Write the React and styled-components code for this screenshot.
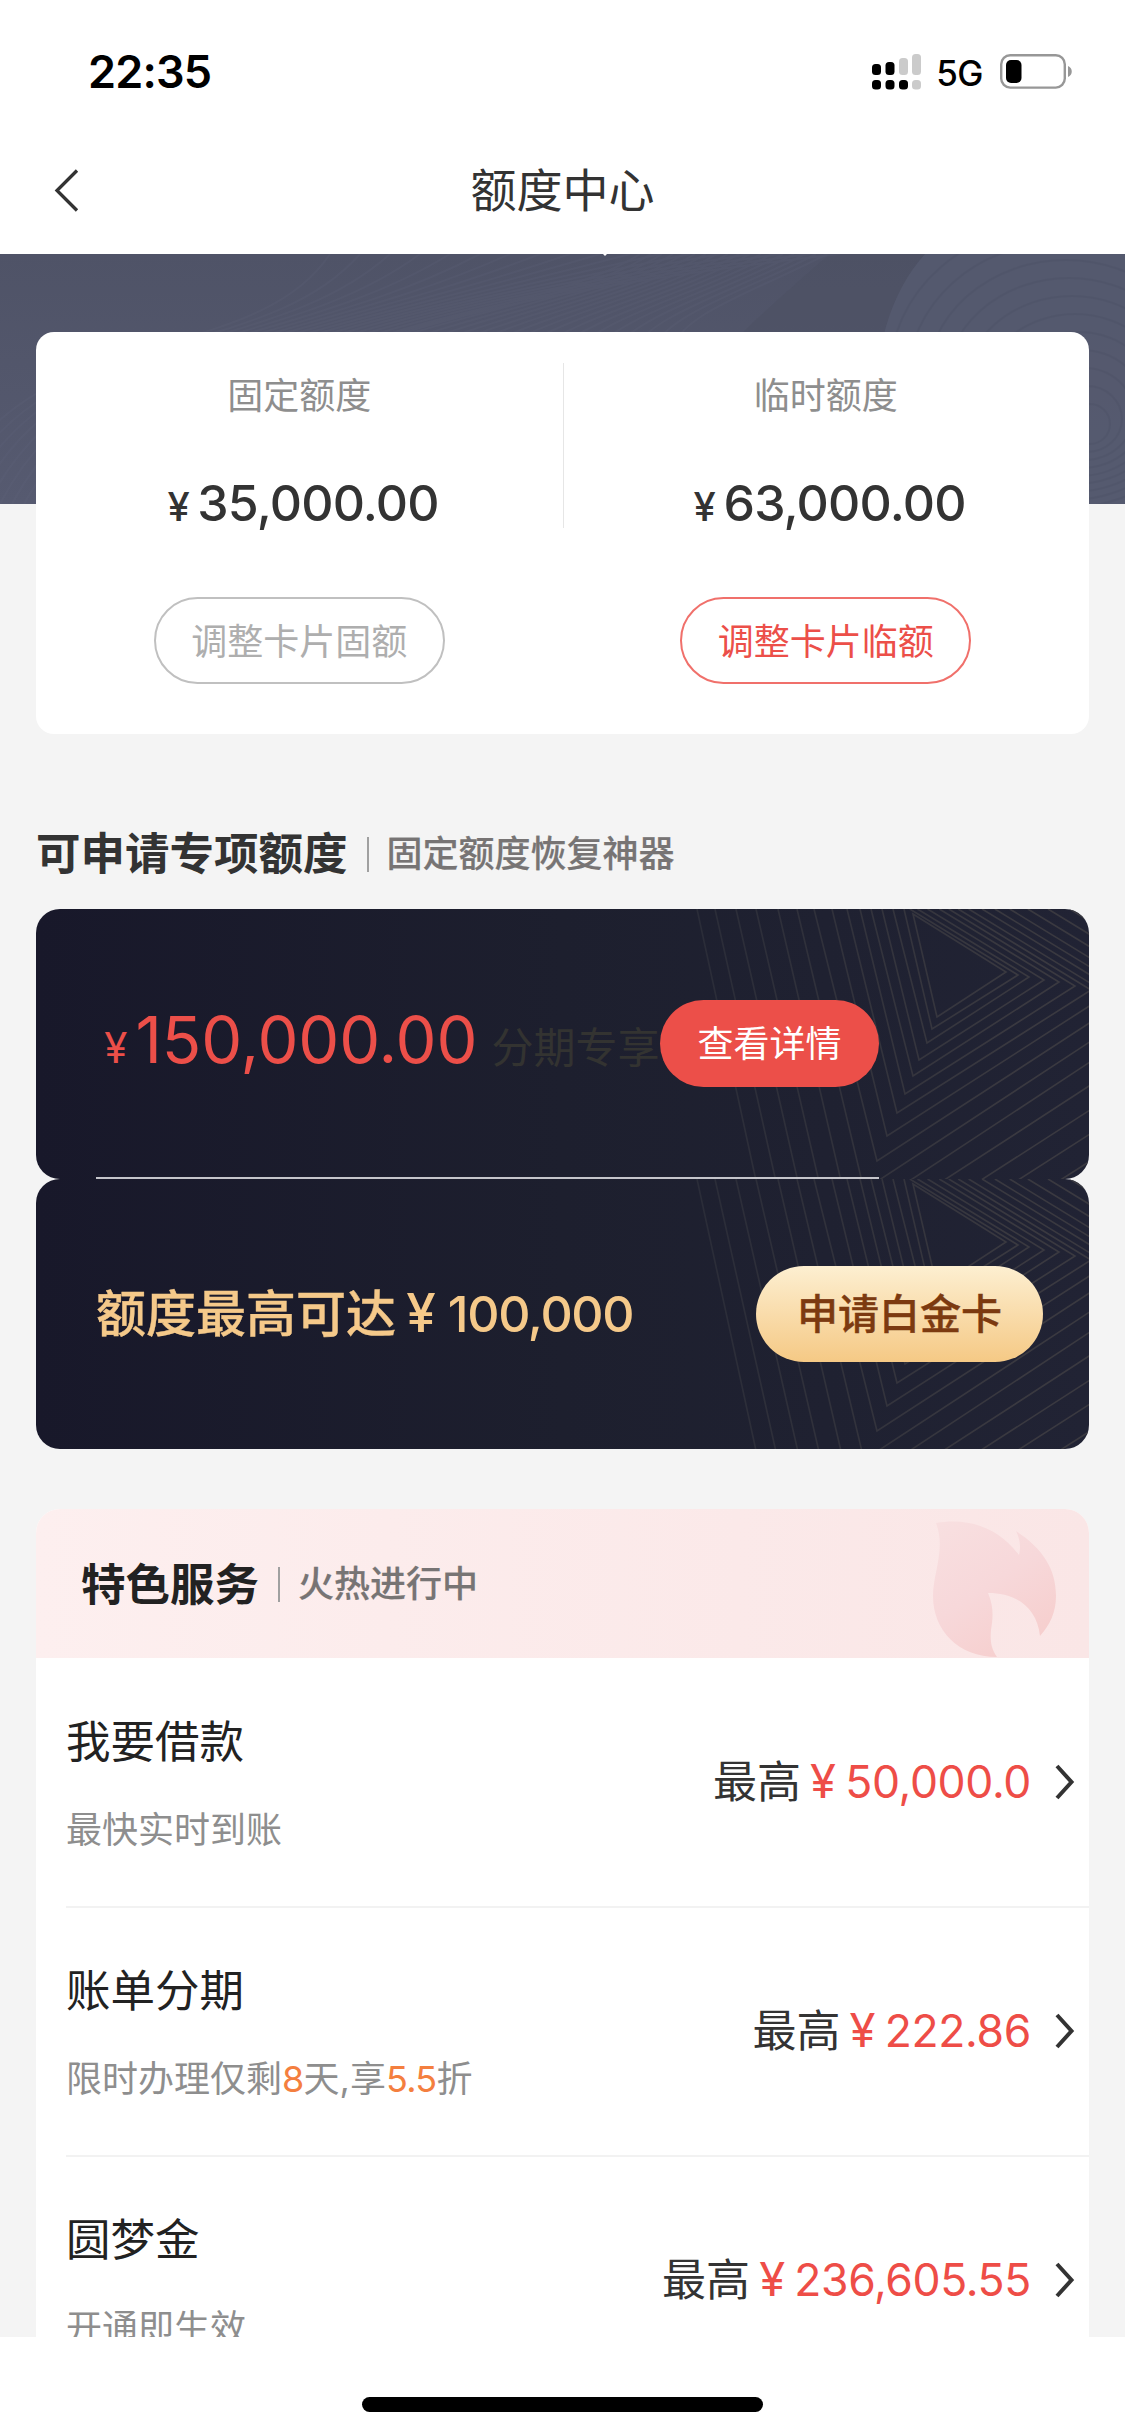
import React from 'react';
import styled, { createGlobalStyle } from 'styled-components';

// Global Styles
const GlobalStyles = createGlobalStyle`
  body {
    margin: 0;
    padding: 0;
    background-color: #ffffff;
    font-family: Inter, "Noto Sans CJK SC", sans-serif;
    color: #333333;
  }

  * {
    box-sizing: border-box;
  }
`;

// Page shell
const Screen = styled.div`
  display: flex;
  flex-direction: column;
  width: 1125px;
  height: 2435px;
  overflow: hidden;
  background-color: #ffffff;
`;

const StatusBar = styled.header`
  display: flex;
  align-items: center;
  height: 126px;
  padding: 17px 52px 0 88px;
`;

const Clock = styled.div`
  flex: 1;
  font-size: 45px;
  font-weight: 600;
  letter-spacing: -0.8px;
  color: #000000;
`;

const Network = styled.div`
  margin: 2px 17px 0 15px;
  font-size: 35px;
  font-weight: 500;
  letter-spacing: -0.5px;
  color: #000000;
`;

const NavBar = styled.nav`
  display: flex;
  align-items: center;
  height: 128px;
  padding: 0 54px 0 53px;
`;

const NavTitle = styled.h1`
  flex: 1;
  margin: 0 25px 0 0;
  font-size: 46px;
  font-weight: 400;
  line-height: 60px;
  text-align: center;
`;

const Content = styled.main`
  height: 2083px;
  overflow: hidden;
  background-color: #f4f4f4;
`;

const Hero = styled.div`
  height: 250px;
  background: linear-gradient(180deg, #4f5367 0%, #565a70 100%);

  svg {
    display: block;
  }
`;

// Limit card
const LimitCard = styled.section`
  position: relative;
  display: flex;
  height: 402px;
  margin: -172px 36px 0;
  border-radius: 18px;
  background-color: #ffffff;
`;

const LimitColumn = styled.div`
  display: flex;
  flex: 1;
  flex-direction: column;
  align-items: center;
  padding-top: 39px;
`;

const LimitDivider = styled.div`
  width: 1px;
  height: 165px;
  margin: 31px -1px 0 0;
  background-color: #e6e6e6;
`;

const LimitLabel = styled.div`
  font-size: 36px;
  line-height: 50px;
  color: #8e8e8e;
`;

const LimitAmount = styled.div`
  display: flex;
  align-items: baseline;
  height: 60px;
  margin-top: 52px;
  font-size: 50px;
  font-weight: 500;
  line-height: 60px;
  letter-spacing: -0.8px;
`;

// Full-width currency sign
const Yen = styled.span`
  display: inline-block;
  width: 0.94em;
  font-size: ${props => props.$size || '1.06em'};
  line-height: 1;
  letter-spacing: 0;
  text-align: center;
`;

const OutlineButton = styled.button`
  width: 291px;
  height: 87px;
  margin-top: 64px;
  padding: 0 0 3px;
  border: 2px solid ${props => (props.$active ? '#f0706b' : '#c0c0c0')};
  border-radius: 44px;
  background: none;
  color: ${props => (props.$active ? '#ec4f49' : '#aeaeae')};
  font-family: inherit;
  font-size: 36px;
`;

// Headings
const SectionHeading = styled.div`
  display: flex;
  align-items: center;
  height: 60px;
  margin: 89px 36px 26px;
`;

const HeadingTitle = styled.h2`
  margin: 0;
  padding-top: 2px;
  font-size: 44.5px;
  font-weight: 700;
  line-height: 60px;
  color: ${props => props.$color || '#333333'};
`;

const HeadingNote = styled.span`
  display: flex;
  align-items: center;
  padding-top: 1px;
  font-size: 36px;
  font-weight: 500;
  line-height: 46px;
  color: #777474;
  -webkit-text-stroke: 0.2px #777474;

  &::before {
    content: '';
    width: 2px;
    height: 35px;
    margin: 1px 18px 0 19px;
    background-color: #a0a0a0;
  }
`;

// Dark offer cards
const OfferCard = styled.section`
  position: relative;
  display: flex;
  height: 270px;
  margin: 0 36px;
  padding: 0 46px 0 60px;
  border-radius: 24px;
  overflow: hidden;
  background: linear-gradient(90deg, #18182a 0%, #1d1f2e 50%, #212334 100%);

  > svg {
    position: absolute;
    top: 0;
    right: 0;
  }
`;

const InstallmentOffer = styled.div`
  position: relative;
  display: flex;
  align-items: center;
  width: 783px;
  border-bottom: 2px solid #c5c5cb;
`;

const OfferAmount = styled.div`
  display: flex;
  align-items: baseline;
  width: 564px;
  margin-top: -8px;
  white-space: nowrap;
  color: #ec4f49;
`;

const OfferNumber = styled.span`
  width: 356px;
  font-size: 65px;
  letter-spacing: -0.1px;
`;

const OfferNote = styled.span`
  font-size: 42px;
  color: #333331;
`;

const DetailButton = styled.button`
  width: 219px;
  height: 87px;
  padding: 0 0 4px;
  border: none;
  border-radius: 44px;
  background-color: #ec4f49;
  color: #ffffff;
  font-family: inherit;
  font-size: 36px;
`;

const PlatinumOffer = styled.div`
  position: relative;
  display: flex;
  flex: 1;
  align-items: center;
  justify-content: space-between;
`;

const PlatinumText = styled.div`
  margin-top: -8px;
  font-size: 50px;
  font-weight: 500;
  color: #f5c98a;
  -webkit-text-stroke: 0.4px #f5c98a;

  span {
    -webkit-text-stroke: 0;
  }
`;

const PlatinumNumber = styled.span`
  margin-left: 2px;
  letter-spacing: -1.3px;
`;

const PlatinumButton = styled.button`
  width: 287px;
  height: 96px;
  padding: 0 0 6px;
  border: none;
  border-radius: 48px;
  background: linear-gradient(180deg, #fdefd1 0%, #f5c985 100%);
  color: #7c3a10;
  font-family: inherit;
  font-size: 41px;
  font-weight: 500;
  -webkit-text-stroke: 0.4px #7c3a10;
`;

// Service list
const ServiceCard = styled.section`
  margin: 60px 36px 0;
  border-radius: 24px 24px 0 0;
  overflow: hidden;
  background-color: #ffffff;
`;

const ServiceHeader = styled.div`
  display: flex;
  align-items: center;
  justify-content: space-between;
  height: 149px;
  padding: 0 32px 0 45px;
  background: linear-gradient(90deg, #fdefef 0%, #fae6e6 100%);

  > svg {
    align-self: flex-start;
    margin-top: 12px;
  }
`;

const HeaderText = styled.div`
  display: flex;
  align-items: center;
`;

const ServiceRow = styled.div`
  display: flex;
  justify-content: space-between;
  height: ${props => (props.$first ? '248px' : '249px')};
  margin-left: 30px;
  padding: ${props => (props.$first ? '54px' : '53px')} 14px 0 0;
  border-top: ${props => (props.$first ? 'none' : '2px solid #f2f2f2')};
`;

const ServiceName = styled.div`
  font-size: 44.5px;
  line-height: 60px;
  color: #222222;
`;

const ServiceNote = styled.div`
  margin-top: 33px;
  font-size: 36px;
  line-height: 50px;
  color: #8e8e8e;

  em {
    font-style: normal;
    letter-spacing: -0.7px;
    color: #f47f3f;
  }
`;

const ServiceLimit = styled.div`
  display: flex;
  align-items: center;
  height: 60px;
  margin-top: 40px;
  font-size: 44px;
  line-height: 60px;

  svg {
    margin-left: 24px;
  }
`;

const ServiceAmount = styled.span`
  font-size: 44.5px;
  letter-spacing: -0.35px;
  color: #ee4d47;
`;

const BottomBar = styled.footer`
  display: flex;
  flex: 1;
  align-items: flex-end;
  justify-content: center;
  padding-bottom: 23px;
`;

const HomeIndicator = styled.div`
  width: 401px;
  height: 15px;
  border-radius: 8px;
  background-color: #000000;
`;

const services = [
  { name: '我要借款', note: '最快实时到账', limit: '50,000.0' },
  {
    name: '账单分期',
    note: <>限时办理仅剩<em>8</em>天,享<em>5.5</em>折</>,
    limit: '222.86',
  },
  { name: '圆梦金', note: '开通即生效', limit: '236,605.55' },
];

const SignalIcon = () => (
  <svg width="49" height="36" viewBox="0 0 49 36">
    <rect x="0" y="10" width="9" height="11" rx="3.5" />
    <rect x="13.5" y="8" width="9" height="13" rx="3.5" />
    <rect x="27" y="4" width="9" height="17" rx="3.5" fill="#cbcbcb" />
    <rect x="40" y="0" width="9" height="21" rx="3.5" fill="#cbcbcb" />
    <rect x="0" y="26" width="9" height="9.5" rx="3.5" />
    <rect x="13.5" y="26" width="9" height="9.5" rx="3.5" />
    <rect x="27" y="26" width="9" height="9.5" rx="3.5" />
    <rect x="40" y="26" width="9" height="9.5" rx="3.5" fill="#cbcbcb" />
  </svg>
);

const BatteryIcon = () => (
  <svg width="73" height="35" viewBox="0 0 73 35">
    <rect x="1.2" y="1.2" width="63.6" height="32.4" rx="9" fill="none" stroke="#979797" strokeWidth="2.4" />
    <rect x="6" y="6" width="15.5" height="23" rx="5" />
    <path d="M68 12c5 2 5 9 0 11z" fill="#979797" />
  </svg>
);

const BackIcon = () => (
  <svg width="26" height="44" viewBox="0 0 26 44" fill="none" stroke="#333333" strokeWidth="3.3">
    <path d="M24 2.500L4 22.500L24 42.500" />
  </svg>
);

const ArrowIcon = () => (
  <svg width="20" height="36" viewBox="0 0 20 36" fill="none" stroke="#333333" strokeWidth="4">
    <path d="M2 2L16.500 18L2 34" />
  </svg>
);

const FlameIcon = () => (
  <svg width="124" height="137" viewBox="0 0 124 137">
    <defs>
      <linearGradient id="flame" x1="0.1" y1="0" x2="0.7" y2="1">
        <stop offset="0" stopColor="#f8dfe0" />
        <stop offset="0.5" stopColor="#f7d8da" />
        <stop offset="1" stopColor="#f6cecd" />
      </linearGradient>
    </defs>
    <path
      d="M3 2C38 -4 66 8 86 34C88 26 87 18 83 10C110 28 123 48 123 75C123 91 117 104 107 115C104 87 84 72 55 72C61 86 60 97 58 109C57 119 58 128 64 136C25 136 0 109 0 75C0 52 13 28 3 2Z"
      fill="url(#flame)"
    />
  </svg>
);

// Faint contour lines behind the limit card
const HeroWaves = () => {
  const steps = Array.from({ length: 18 }, (_, i) => i);

  return (
    <svg width="1125" height="250" viewBox="0 0 1125 250" fill="none" strokeWidth="2">
      <path d="M600 250C680 130 760 60 830 0H1125V250Z" fill="#4c4f62" opacity="0.45" />
      <g stroke="#686c84" opacity="0.14">
        {steps.map(i => (
          <path key={i} d={`M${i * 12 - 60} 250C${20 + i * 14} ${60 + i * 3} ${250 + i * 8} ${120 - i * 4} ${330 + i * 30} 0`} />
        ))}
        {steps.map(i => (
          <path key={i} d={`M${330 + i * 20} 100C${440 + i * 14} 60 ${580 + i * 10} 40 ${640 + i * 11} 0`} />
        ))}
      </g>
      <path d="M878 250C865 130 880 50 925 0H1125V250Z" fill="#565b70" opacity="0.8" />
      <g stroke="#454a5e" opacity="0.2">
        {steps.slice(0, 11).map(i => (
          <ellipse key={i} cx={1060 + i * 3} cy={120 + i * 5} rx={170 - i * 15} ry={150 - i * 13} />
        ))}
      </g>
      <path d="M603 0h4l-2 2z" fill="#ffffff" />
    </svg>
  );
};

// Nested triangles: left edge start, lower corner x/y, right corner x/y
const triangles = [
  [304, 332, 120, 418, 66], [293, 327, 134, 429, 68], [282, 319, 151, 444, 71],
  [271, 313, 167, 459, 73], [260, 305, 185, 475, 77], [247, 297, 204, 491, 81],
  [232, 287, 227, 508, 85], [214, 277, 252, 528, 89], [197, 264, 281, 549, 94],
  [178, 250, 311, 572, 99], [156, 235, 342, 600, 105], [136, 221, 374, 630, 111],
  [115, 206, 407, 660, 116], [97, 193, 442, 695, 121],
];

const TrianglePattern = ({ id }) => (
  <svg width="489" height="270" viewBox="0 0 489 270" fill="none" strokeWidth="1.6">
    <defs>
      <linearGradient id={id} gradientUnits="userSpaceOnUse" x1="90" y1="0" x2="420" y2="0">
        <stop offset="0" stopColor="#2a2c38" />
        <stop offset="1" stopColor="#3a3940" />
      </linearGradient>
    </defs>
    <g stroke={`url(#${id})`}>
      <path d="M313 5L337 108L406 63Z" />
      {triangles.map(([top, x, y, tipX, tipY]) => (
        <path key={top} d={`M${top} 0L${x} ${y}L${tipX} ${tipY}L${tipX - tipY / 0.61} 0`} />
      ))}
    </g>
  </svg>
);

const App = () => {
  return (
    <Screen>
      <GlobalStyles />
      <StatusBar>
        <Clock>22:35</Clock>
        <SignalIcon />
        <Network>5G</Network>
        <BatteryIcon />
      </StatusBar>
      <NavBar>
        <BackIcon />
        <NavTitle>额度中心</NavTitle>
      </NavBar>

      <Content>
        <Hero>
          <HeroWaves />
        </Hero>
        <LimitCard>
          <LimitColumn>
            <LimitLabel>固定额度</LimitLabel>
            <LimitAmount><Yen $size="40px">¥</Yen>35,000.00</LimitAmount>
            <OutlineButton>调整卡片固额</OutlineButton>
          </LimitColumn>
          <LimitDivider />
          <LimitColumn>
            <LimitLabel>临时额度</LimitLabel>
            <LimitAmount><Yen $size="40px">¥</Yen>63,000.00</LimitAmount>
            <OutlineButton $active>调整卡片临额</OutlineButton>
          </LimitColumn>
        </LimitCard>

        <SectionHeading>
          <HeadingTitle>可申请专项额度</HeadingTitle>
          <HeadingNote>固定额度恢复神器</HeadingNote>
        </SectionHeading>

        <OfferCard>
          <TrianglePattern id="lines-installment" />
          <InstallmentOffer>
            <OfferAmount>
              <Yen $size="42px">¥</Yen>
              <OfferNumber>150,000.00</OfferNumber>
              <OfferNote>分期专享</OfferNote>
            </OfferAmount>
            <DetailButton>查看详情</DetailButton>
          </InstallmentOffer>
        </OfferCard>
        <OfferCard>
          <TrianglePattern id="lines-platinum" />
          <PlatinumOffer>
            <PlatinumText>
              额度最高可达<Yen>¥</Yen><PlatinumNumber>100,000</PlatinumNumber>
            </PlatinumText>
            <PlatinumButton>申请白金卡</PlatinumButton>
          </PlatinumOffer>
        </OfferCard>

        <ServiceCard>
          <ServiceHeader>
            <HeaderText>
              <HeadingTitle $color="#222222">特色服务</HeadingTitle>
              <HeadingNote>火热进行中</HeadingNote>
            </HeaderText>
            <FlameIcon />
          </ServiceHeader>
          {services.map((service, index) => (
            <ServiceRow key={service.name} $first={index === 0}>
              <div>
                <ServiceName>{service.name}</ServiceName>
                <ServiceNote>{service.note}</ServiceNote>
              </div>
              <ServiceLimit>
                最高
                <ServiceAmount><Yen>¥</Yen>{service.limit}</ServiceAmount>
                <ArrowIcon />
              </ServiceLimit>
            </ServiceRow>
          ))}
        </ServiceCard>
      </Content>

      <BottomBar>
        <HomeIndicator />
      </BottomBar>
    </Screen>
  );
};

export default App;
